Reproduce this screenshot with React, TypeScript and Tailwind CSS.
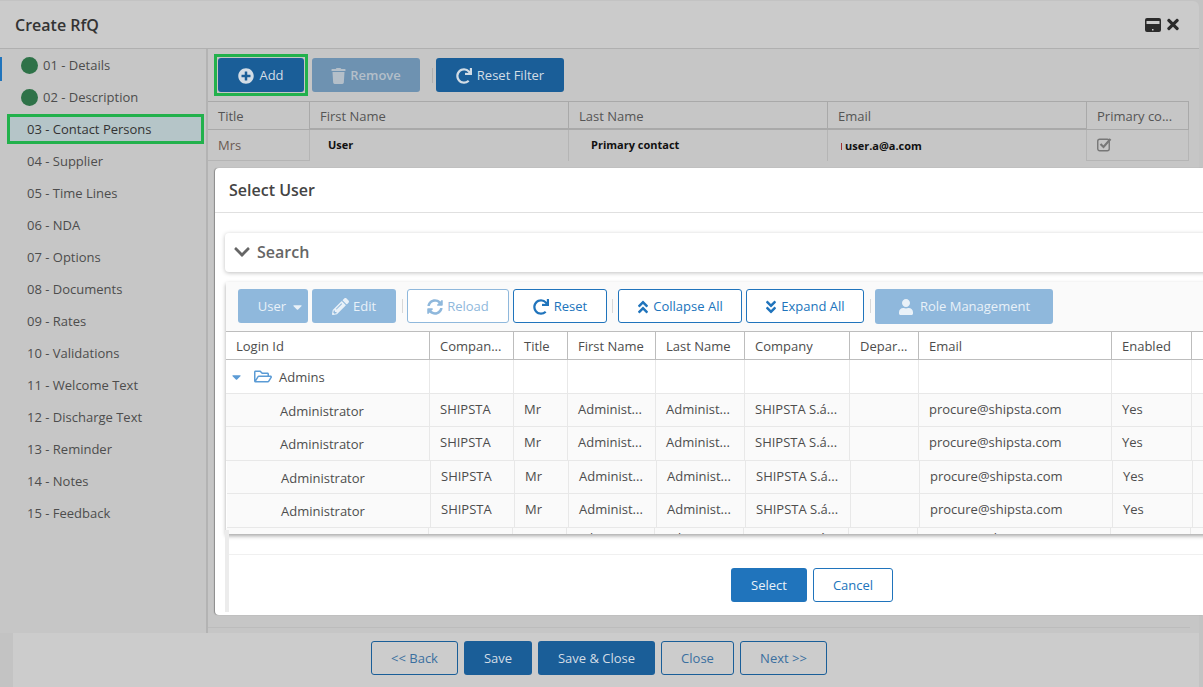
import {
    FaAngleDoubleDown,
    FaAngleDoubleUp,
    FaCaretDown,
    FaChevronDown,
    FaPencilAlt,
    FaPlusCircle,
    FaRedo,
    FaRegFolderOpen,
    FaSyncAlt,
    FaTimes,
    FaTrash,
    FaUser,
} from 'react-icons/fa';

const steps = [
    { label: '01 - Details', done: true },
    { label: '02 - Description', done: true },
    { label: '03 - Contact Persons', active: true },
    { label: '04 - Supplier' },
    { label: '05 - Time Lines' },
    { label: '06 - NDA' },
    { label: '07 - Options' },
    { label: '08 - Documents' },
    { label: '09 - Rates' },
    { label: '10 - Validations' },
    { label: '11 - Welcome Text' },
    { label: '12 - Discharge Text' },
    { label: '13 - Reminder' },
    { label: '14 - Notes' },
    { label: '15 - Feedback' },
];

const columns = ['Login Id', 'Compan...', 'Title', 'First Name', 'Last Name', 'Company', 'Depar...', 'Email', 'Enabled', ''];
const values = ['Administrator', 'SHIPSTA', 'Mr', 'Administ...', 'Administ...', 'SHIPSTA S.á...', '', 'procure@shipsta.com', 'Yes', ''];

const gridCols = 'grid grid-cols-[204px_84px_54px_88px_89px_105px_69px_193px_80px_1fr]';

const UserRow = ({ className, clipped = false }: { className: string; clipped?: boolean }) => (
    <div className={`${gridCols} border-b border-[#e8e8e8] bg-[#fafafa] ${className}`}>
        {values.map((value, index) => (
            <div
                key={index}
                className={`border-r border-[#e8e8e8] leading-[20px] whitespace-nowrap ${index === 0 ? 'pt-[7px] pl-[54px]' : clipped ? 'pl-[10px]' : 'pt-[5px] pl-[10px]'}`}
            >
                {value}
            </div>
        ))}
    </div>
);

const Separator = ({ className }: { className: string }) => <div className={`mt-[10px] h-[14px] w-px bg-[#d8d8d8] ${className}`} />;

const App = () => {
    return (
        <div className="relative h-[687px] w-[1203px] overflow-hidden bg-[#c3c3c3] font-['Open_Sans',sans-serif] text-[13px] text-[#4d4d4d]">
            <div className="mt-px flex h-[686px] w-[1199px] flex-col">
                {/* Title bar */}
                <div className="flex h-[48px] shrink-0 items-center justify-between rounded-tr-md border-b border-[#b0b0b0] bg-[#cbcbcb] pr-[20px] pl-[15px]">
                    <h1 className="pt-px text-[16px] font-semibold text-[#333]">Create RfQ</h1>
                    <div className="flex items-center gap-[6px] text-[#2b2b2b]">
                        <svg width="16" height="14" viewBox="0 0 16 14">
                            <path d="M2 0h12a2 2 0 0 1 2 2v10a2 2 0 0 1-2 2H2a2 2 0 0 1-2-2V2a2 2 0 0 1 2-2zM1.5 3v3h13V3z" fill="#2b2b2b" fillRule="evenodd" />
                            <rect x="7" y="11" width="1.5" height="1.5" fill="#ccc" />
                        </svg>
                        <FaTimes className="h-[17px] w-[12px]" />
                    </div>
                </div>

                <div className="flex min-h-0 flex-1">
                    {/* Steps */}
                    <nav className="flex w-[208px] shrink-0 flex-col border-r-2 border-[#b3b3b3] bg-[#c6c6c6]">
                        {steps.map((step) => (
                            <div
                                key={step.label}
                                className={`flex shrink-0 items-center ${step.active ? 'my-px ml-[7px] h-[30px] w-[197px] border-[3px] border-[#22b14c] bg-[#b5c5c8] pl-[17px] text-[#333]' : step.done ? 'h-[32px] pl-[21px]' : 'h-[32px] pl-[27px]'}`}
                            >
                                {step.done && <span className="mr-[5px] h-[17px] w-[17px] rounded-full bg-[#2e7248]" />}
                                <span className="pt-[2px]">{step.label}</span>
                            </div>
                        ))}
                    </nav>

                    {/* Contact persons */}
                    <main className="flex min-w-0 flex-1 flex-col bg-[#c6c6c6]">
                        <div className="flex h-[52px] shrink-0 items-start pt-[5px] pl-[6px]">
                            <div className="border-[3px] border-[#22b14c] p-px">
                                <button className="flex h-[34px] w-[86px] items-center justify-center gap-[5px] rounded-[3px] bg-[#1a5e98] pt-px text-[#d3dde6]">
                                    <FaPlusCircle className="h-[16px] w-[16px]" />
                                    Add
                                </button>
                            </div>
                            <button className="mt-[4px] ml-[4px] flex h-[34px] w-[108px] items-center justify-center gap-[4px] rounded-[3px] bg-[#6e92b1] pt-px font-semibold text-[#b4bfc9]">
                                <FaTrash className="h-[16px] w-[15px]" />
                                Remove
                            </button>
                            <div className="mt-[14px] ml-[12px] h-[15px] w-px bg-[#b0b0b0]" />
                            <button className="mt-[4px] ml-[3px] flex h-[34px] w-[128px] items-center justify-center gap-[5px] rounded-[3px] bg-[#1a5e98] pt-px text-[#d3dde6]">
                                <FaRedo className="h-[16px] w-[16px]" />
                                Reset Filter
                            </button>
                        </div>
                        <div className="grid w-[981px] shrink-0 grid-cols-[102px_259px_259px_259px_102px] text-[#555]">
                            {['Title', 'First Name', 'Last Name', 'Email', 'Primary co...'].map((title, index) => (
                                <div
                                    key={title}
                                    className={`flex h-[29px] items-center border-t border-r border-[#a9a9a9] pl-[10px] ${index === 0 || index === 4 ? 'border-b pt-[2px]' : 'border-b-2 pt-[3px]'}`}
                                >
                                    {title}
                                </div>
                            ))}
                            <div className="flex h-[31px] items-center border-r border-b border-[#b5b5b5] pt-px pl-[10px] text-[#6b5a52]">Mrs</div>
                            <div className="flex h-[31px] items-center border-r border-[#b5b5b5] pl-[18px] text-[11px] font-bold text-[#111]">User</div>
                            <div className="flex h-[31px] items-center border-r border-[#b5b5b5] pl-[22px] text-[11px] font-bold text-[#111]">Primary contact</div>
                            <div className="flex h-[31px] items-center border-r border-[#b5b5b5] pt-[2px] pl-[13px] text-[11px] font-bold text-[#111]">
                                <span className="mr-[3px] h-[7px] w-px bg-[#a03030]" />
                                user.a@a.com
                            </div>
                            <div className="flex h-[31px] items-start border-r border-b border-[#b5b5b5] pt-[7px] pl-[10px]">
                                <svg width="16" height="15" viewBox="0 0 16 15" fill="none" stroke="#777">
                                    <rect x="0.75" y="2.25" width="11.5" height="11.5" rx="2" strokeWidth="1.4" />
                                    <path d="M3.5 7l3 3 7-8" strokeWidth="2.2" />
                                </svg>
                            </div>
                        </div>
                        <div className="flex-1" />
                        <div className="mr-[9px] mb-[5px] h-px shrink-0 bg-[#bcbcbc]" />
                    </main>
                </div>

                {/* Footer */}
                <footer className="ml-[13px] flex h-[54px] shrink-0 items-start justify-center gap-[6px] bg-[#cccccc] pt-[8px] pr-[14px]">
                    <button className="h-[34px] w-[87px] rounded-[3px] border border-[#1a5e98] pt-px text-[#3a6f9f]">&lt;&lt; Back</button>
                    <button className="h-[34px] w-[68px] rounded-[3px] bg-[#1a5e98] pt-px text-[#d3dde6]">Save</button>
                    <button className="h-[34px] w-[117px] rounded-[3px] bg-[#1a5e98] pt-px text-[#d3dde6]">Save &amp; Close</button>
                    <button className="h-[34px] w-[73px] rounded-[3px] border border-[#1a5e98] pt-px text-[#3a6f9f]">Close</button>
                    <button className="h-[34px] w-[87px] rounded-[3px] border border-[#1a5e98] pt-px text-[#3a6f9f]">Next &gt;&gt;</button>
                </footer>
            </div>

            {/* Edge of the window behind */}
            <div className="absolute top-[57px] left-0 h-[24px] w-[2px] bg-[#2074bc]" />

            {/* Select User dialog */}
            <div className="absolute top-[168px] right-0 left-[215px] flex h-[447px] flex-col overflow-hidden rounded-tl-[4px] rounded-bl-[4px] bg-white shadow-[-1px_0_1px_rgba(0,0,0,0.3)]">
                <div className="flex h-[45px] shrink-0 items-center border-b border-[#e0e0e0] pl-[14px] text-[16px] font-semibold text-[#444]">Select User</div>

                <div className="mt-[20px] ml-[10px] flex h-[39px] w-[1000px] shrink-0 items-center gap-[7px] rounded-[4px] pb-[2px] pl-[9px] text-[16px] font-semibold text-[#666] shadow-[0_1px_4px_rgba(0,0,0,0.25)]">
                    <FaChevronDown className="h-[18px] w-[16px]" />
                    Search
                </div>

                <div className="mt-[10px] ml-[11px] flex h-[252px] w-[1000px] shrink-0 flex-col overflow-hidden bg-white shadow-[0_2px_4px_rgba(0,0,0,0.35)]">
                    <div className="flex h-[49px] shrink-0 items-start bg-[#fafafa] pt-[7px] pl-[12px]">
                        <button className="flex h-[34px] w-[70px] items-center justify-end gap-[6px] rounded-[3px] bg-[#8fb8dc] pt-px pr-[5px] text-[#e9f1f8]">
                            User
                            <FaCaretDown className="h-[14px] w-[11px]" />
                        </button>
                        <button className="ml-[4px] flex h-[34px] w-[84px] items-center justify-center gap-[4px] rounded-[3px] bg-[#8fb8dc] pt-px text-[#e9f1f8]">
                            <FaPencilAlt className="h-[17px] w-[17px]" />
                            Edit
                        </button>
                        <Separator className="mr-[4px] ml-[6px]" />
                        <button className="flex h-[34px] w-[102px] items-center justify-center gap-[4px] rounded-[3px] border border-[#8fb8dc] bg-white pt-px text-[#8fb8dc]">
                            <FaSyncAlt className="h-[16px] w-[16px]" />
                            Reload
                        </button>
                        <button className="ml-[4px] flex h-[34px] w-[94px] items-center justify-center gap-[5px] rounded-[3px] border border-[#2074bc] bg-white pt-px text-[#2074bc]">
                            <FaRedo className="h-[16px] w-[16px]" />
                            Reset
                        </button>
                        <Separator className="mx-[5px]" />
                        <button className="flex h-[34px] w-[124px] items-center justify-center gap-[4px] rounded-[3px] border border-[#2074bc] bg-white pt-px text-[#2074bc]">
                            <FaAngleDoubleUp className="h-[16px] w-[12px]" />
                            Collapse All
                        </button>
                        <button className="ml-[4px] flex h-[34px] w-[118px] items-center justify-center gap-[4px] rounded-[3px] border border-[#2074bc] bg-white pt-px text-[#2074bc]">
                            <FaAngleDoubleDown className="h-[16px] w-[12px]" />
                            Expand All
                        </button>
                        <Separator className="mr-[4px] ml-[6px]" />
                        <button className="flex h-[35px] w-[178px] items-center justify-center gap-[6px] rounded-[3px] bg-[#8fb8dc] pt-px text-[#e9f1f8]">
                            <FaUser className="h-[16px] w-[16px]" />
                            Role Management
                        </button>
                    </div>

                    <div className={`${gridCols} h-[29px] shrink-0 border-y border-[#bdbdbd] bg-white`}>
                        {columns.map((title, index) => (
                            <div key={index} className="flex items-center border-r border-[#bdbdbd] pt-[2px] pl-[10px] whitespace-nowrap">
                                {title}
                            </div>
                        ))}
                    </div>

                    <div className={`${gridCols} h-[34px] shrink-0 border-b border-[#e8e8e8] bg-white`}>
                        <div className="flex items-start border-r border-[#e8e8e8] pt-[7px] pl-[5px] leading-[20px]">
                            <FaCaretDown className="mt-[3px] mr-[12px] h-[14px] w-[11px] text-[#5b9bd5]" />
                            <FaRegFolderOpen className="mt-[1px] mr-[7px] h-[17px] w-[18px] text-[#5b9bd5]" />
                            Admins
                        </div>
                        {columns.slice(1).map((_, index) => (
                            <div key={index} className="border-r border-[#e8e8e8]" />
                        ))}
                    </div>
                    <UserRow className="h-[33px] shrink-0" />
                    <UserRow className="h-[34px] shrink-0" />
                    <UserRow className="ml-px h-[33px] shrink-0" />
                    <UserRow className="ml-px h-[34px] shrink-0" />
                    <UserRow clipped className="-ml-px h-[8px] shrink-0 overflow-hidden" />
                </div>

                <div className="mt-[20px] ml-[12px] h-px shrink-0 bg-[#f0f0f0]" />
                <div className="mt-[13px] flex shrink-0 gap-[6px] pl-[516px]">
                    <button className="h-[34px] w-[76px] rounded-[3px] bg-[#2074bc] pt-px text-[#e9f1f8]">Select</button>
                    <button className="h-[34px] w-[80px] rounded-[3px] border border-[#2074bc] bg-white pt-px text-[#2074bc]">Cancel</button>
                </div>

                {/* Seam of the pasted panel */}
                <div className="absolute top-[362px] bottom-[3px] left-[10px] w-[4px] bg-[#ececec]" />
            </div>
        </div>
    );
};

export default App;
